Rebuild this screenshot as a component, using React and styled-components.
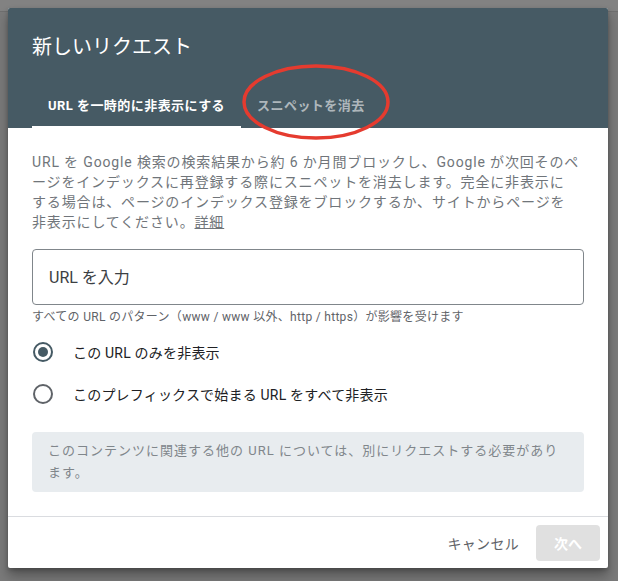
import React from "react";
import styled, { createGlobalStyle } from "styled-components";

const GlobalStyle = createGlobalStyle`
  html, body {
    margin: 0;
    padding: 0;
  }
  body {
    background: linear-gradient(#828282 0, #828282 11px, #6f6f6f 11px, #6f6f6f 12px, #7a7a7a 12px);
    font-family: Roboto, "Noto Sans CJK JP", sans-serif;
    padding: 8px;
    min-height: 581px;
    box-sizing: border-box;
  }
`;

const Dialog = styled.div`
  position: relative;
  width: 600px;
  height: 560px;
  background: #ffffff;
  border-radius: 2px;
  box-shadow: 0 8px 12px rgba(0, 0, 0, 0.3), 0 2px 4px rgba(0, 0, 0, 0.2);
  display: flex;
  flex-direction: column;
`;

const Header = styled.div`
  background: #465a64;
  padding: 25px 24px 0;
  border-radius: 2px 2px 0 0;
`;

const Title = styled.h2`
  margin: 0 0 19px;
  font-size: 20px;
  line-height: 28px;
  font-weight: 400;
  color: #ffffff;
`;

const Tabs = styled.div`
  display: flex;
  height: 48px;
`;

const Tab = styled.div`
  display: flex;
  align-items: center;
  padding: 0 16px;
  font-size: 13px;
  font-weight: 700;
  letter-spacing: 0.45px;
  color: ${({ $active }) => ($active ? "#ffffff" : "rgba(255, 255, 255, 0.58)")};
  box-shadow: ${({ $active }) => ($active ? "inset 0 -2px 0 #ffffff" : "none")};
`;

const Body = styled.div`
  flex: 1;
  padding: 24px;
`;

const Intro = styled.p`
  margin: 0 0 17px;
  font-size: 14px;
  line-height: 20px;
  letter-spacing: 0.85px;
  white-space: nowrap;
  color: #70757a;
`;

const Link = styled.a`
  color: #70757a;
  text-decoration: underline;
`;

const UrlInput = styled.input`
  display: block;
  box-sizing: border-box;
  width: 100%;
  height: 56px;
  padding: 0 16px;
  border: 1px solid #80868b;
  border-radius: 4px;
  font-family: inherit;
  font-size: 16px;
  outline: none;
  &::placeholder {
    color: #3c4043;
  }
`;

const Helper = styled.div`
  margin: 4px 0 6px;
  font-size: 12px;
  line-height: 16px;
  letter-spacing: 0.3px;
  color: #5f6368;
`;

const RadioRow = styled.label`
  display: flex;
  align-items: center;
  height: 42px;
  gap: 20px;
  padding-left: 1px;
  font-size: 14px;
  letter-spacing: 0.2px;
  color: #202124;
`;

const RadioCircle = styled.span`
  box-sizing: border-box;
  width: 20px;
  height: 20px;
  border-radius: 50%;
  border: 2px solid ${({ $checked }) => ($checked ? "#455a64" : "#5f6368")};
  display: flex;
  align-items: center;
  justify-content: center;
  &::after {
    content: "";
    width: 10px;
    height: 10px;
    border-radius: 50%;
    background: ${({ $checked }) => ($checked ? "#455a64" : "transparent")};
  }
`;

const Notice = styled.div`
  margin-top: 17px;
  padding: 8px 16px;
  background: #e8ecef;
  border-radius: 4px;
  font-size: 13px;
  line-height: 22px;
  letter-spacing: 1px;
  white-space: nowrap;
  color: #80868b;
`;

const Footer = styled.div`
  border-top: 1px solid #dadce0;
  padding: 8px;
  display: flex;
  justify-content: flex-end;
  align-items: center;
  gap: 9px;
`;

const TextButton = styled.button`
  background: none;
  border: none;
  height: 36px;
  padding: 0 8px;
  font-family: inherit;
  font-size: 14px;
  font-weight: 400;
  color: #5f6368;
  letter-spacing: 0.3px;
`;

const PrimaryButton = styled.button`
  height: 36px;
  width: 64px;
  border: none;
  border-radius: 4px;
  background: #e0e0e0;
  color: #ffffff;
  font-family: inherit;
  font-size: 14px;
  font-weight: 700;
`;

const Annotation = styled.svg`
  position: absolute;
  left: 231px;
  top: 54px;
  pointer-events: none;
`;

const App = () => {
  return (
    <>
      <GlobalStyle />
      <Dialog>
        <Header>
          <Title>新しいリクエスト</Title>
          <Tabs>
            <Tab $active>URL を一時的に非表示にする</Tab>
            <Tab>スニペットを消去</Tab>
          </Tabs>
        </Header>
        <Body>
          <Intro>
            URL を Google 検索の検索結果から約 6 か月間ブロックし、Google が次回そのペ
            <br />
            ージをインデックスに再登録する際にスニペットを消去します。完全に非表示に
            <br />
            する場合は、ページのインデックス登録をブロックするか、サイトからページを
            <br />
            非表示にしてください。<Link>詳細</Link>
          </Intro>
          <UrlInput placeholder="URL を入力" />
          <Helper>すべての URL のパターン（www / www 以外、http / https）が影響を受けます</Helper>
          <RadioRow>
            <RadioCircle $checked />
            この URL のみを非表示
          </RadioRow>
          <RadioRow>
            <RadioCircle />
            このプレフィックスで始まる URL をすべて非表示
          </RadioRow>
          <Notice>
            このコンテンツに関連する他の URL については、別にリクエストする必要があり
            <br />
            ます。
          </Notice>
        </Body>
        <Footer>
          <TextButton>キャンセル</TextButton>
          <PrimaryButton>次へ</PrimaryButton>
        </Footer>
        <Annotation width="154" height="80" viewBox="0 0 154 80">
          <ellipse cx="77" cy="40" rx="72" ry="36" fill="none" stroke="#e53b2f" strokeWidth="3.5" />
        </Annotation>
      </Dialog>
    </>
  );
};

export default App;
